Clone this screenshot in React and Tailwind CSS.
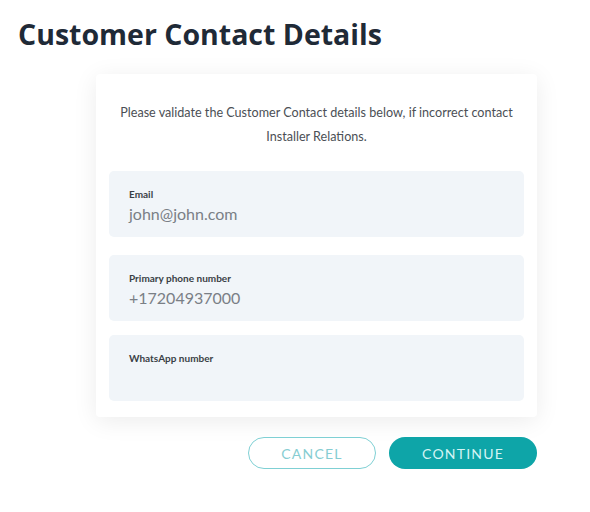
import React from "react";

const fields = [
  { label: "Email", value: "john@john.com", gap: "mt-[22px]" },
  { label: "Primary phone number", value: "+17204937000", gap: "mt-[18px]" },
  { label: "WhatsApp number", value: "", gap: "mt-[14px]" },
];

export default function App() {
  return (
    <div
      className="w-[590px] h-[512px] bg-white overflow-hidden"
      style={{ fontFamily: "Lato, 'Noto Sans', sans-serif" }}
    >
      {/* Header */}
      <h1
        className="ml-[18px] pt-[14px] text-[28.5px] leading-[40px] font-bold text-[#1f2a37]"
        style={{ fontFamily: "'Open Sans', 'Noto Sans', sans-serif" }}
      >
        Customer Contact Details
      </h1>

      {/* Card */}
      <div className="ml-[96px] mt-[20px] w-[441px] bg-white rounded-[4px] shadow-[0_4px_24px_rgba(0,0,0,0.08)] px-[13px] pt-[27px] pb-[16px]">
        <p className="text-center text-[12.6px] leading-[24px] text-[#4b4f55]">
          Please validate the Customer Contact details below, if incorrect contact Installer Relations.
        </p>

        {fields.map((f) => (
          <div key={f.label} className={`${f.gap} h-[66px] rounded-[5px] bg-[#f1f5f9] px-[20px] pt-[17px]`}>
            <p className="text-[10px] leading-[12px] font-bold text-[#3a3f46]">{f.label}</p>
            {f.value && (
              <p className="mt-[4px] text-[16px] leading-[20px] text-[#7a7f86]">{f.value}</p>
            )}
          </div>
        ))}
      </div>

      {/* Actions */}
      <div className="ml-[248px] mt-[20px] flex gap-[13px]">
        <button className="w-[128px] h-[32px] rounded-full border border-[#7fd0d4] bg-white text-[14px] tracking-[1.2px] text-[#86cdd2]">
          CANCEL
        </button>
        <button className="w-[148px] h-[32px] rounded-full bg-[#0ea5a8] text-[14px] tracking-[1.2px] text-[#d4f4f4]">
          CONTINUE
        </button>
      </div>
    </div>
  );
}
